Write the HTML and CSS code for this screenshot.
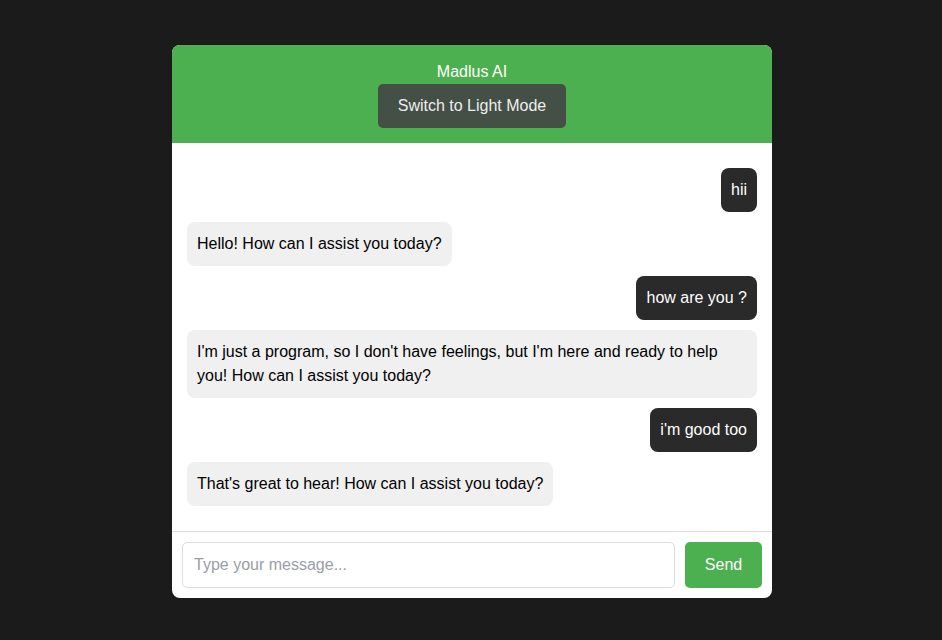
FILE: index.html
```html
<!DOCTYPE html>
<html>
<head>
<meta charset="utf-8">
<link rel="stylesheet" href="styles.css">
</head>
<body>
<div class="chat">
  <div class="header">
    <div class="title">Madlus AI</div>
    <button class="mode-btn">Switch to Light Mode</button>
  </div>
  <div class="messages">
    <div class="msg user">hii</div>
    <div class="msg bot">Hello! How can I assist you today?</div>
    <div class="msg user">how are you ?</div>
    <div class="msg bot">I'm just a program, so I don't have feelings, but I'm here and ready to help you! How can I assist you today?</div>
    <div class="msg user">i'm good too</div>
    <div class="msg bot">That's great to hear! How can I assist you today?</div>
  </div>
  <div class="input-area">
    <input class="input" type="text" placeholder="Type your message...">
    <button class="send">Send</button>
  </div>
</div>
</body>
</html>
```

FILE: styles.css
```css
html, body {
  margin: 0;
  padding: 0;
}
body {
  background: #1b1b1b;
  font-family: "Liberation Sans", Arial, sans-serif;
  display: flex;
  justify-content: center;
  align-items: flex-start;
  padding-top: 45px;
  padding-left: 2px;
  height: 640px;
  box-sizing: border-box;
}
.chat {
  width: 600px;
  height: 553px;
  background: #fff;
  border-radius: 8px;
  overflow: hidden;
  display: flex;
  flex-direction: column;
}
.header {
  background: #4caf50;
  color: #fff;
  display: flex;
  flex-direction: column;
  align-items: center;
  padding: 18px 0 15px;
  height: 98px;
  box-sizing: border-box;
}
.title {
  font-size: 16px;
  line-height: 18px;
  height: 18px;
  margin-bottom: 3px;
}
.mode-btn {
  background: #444f46;
  color: #eee;
  border: none;
  border-radius: 5px;
  font-family: "Liberation Sans", Arial, sans-serif;
  font-size: 16px;
  height: 44px;
  padding: 0 20px;
}
.messages {
  flex: 1;
  display: flex;
  flex-direction: column;
  gap: 10px;
  padding: 25px 15px;
  box-sizing: border-box;
  border-bottom: 1px solid #ddd;
}
.msg {
  font-size: 16px;
  line-height: 24px;
  padding: 10px;
  border-radius: 8px;
}
.user {
  align-self: flex-end;
  background: #2a2a2a;
  color: #fff;
}
.bot {
  align-self: flex-start;
  background: #f0f0f0;
  color: #000;
}
.input-area {
  display: flex;
  gap: 10px;
  padding: 10px;
  height: 66px;
  box-sizing: border-box;
}
.input {
  flex: 1;
  height: 46px;
  box-sizing: border-box;
  border: 1px solid #ddd;
  border-radius: 5px;
  padding: 0 11px;
  font-family: "Liberation Sans", Arial, sans-serif;
  font-size: 16px;
  outline: none;
}
.input::placeholder {
  color: #9a9da6;
}
.send {
  width: 77px;
  height: 46px;
  background: #4caf50;
  color: #fff;
  border: none;
  border-radius: 5px;
  font-family: "Liberation Sans", Arial, sans-serif;
  font-size: 16px;
}
```
